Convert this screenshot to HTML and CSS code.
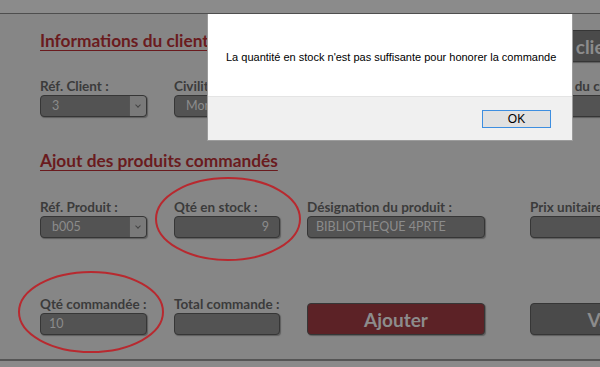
FILE: index.html
```html
<!DOCTYPE html>
<html lang="fr">
<head>
  <meta charset="UTF-8" />
  <title>Commandes clients</title>
  <link rel="stylesheet" href="styles.css">
</head>
<body>
  <div class="topbar"></div>

  <main class="form">
    <div class="head-row">
      <h2 class="section-title">Informations du client</h2>
      <button class="btn btn-dark btn-client">Voir client</button>
    </div>

    <div class="fields row-client">
      <div class="field">
        <label>Réf. Client :</label>
        <div class="select"><span>3</span><i class="caret"></i></div>
      </div>
      <div class="field">
        <label>Civilité :</label>
        <div class="select"><span>Monsieur</span><i class="caret"></i></div>
      </div>
      <div class="field">
        <label>Nom du client :</label>
        <div class="input"></div>
      </div>
      <div class="field">
        <label>Région du client :</label>
        <div class="input"></div>
      </div>
    </div>

    <h2 class="section-title title-products">Ajout des produits commandés</h2>

    <div class="fields row-product">
      <div class="field">
        <label>Réf. Produit :</label>
        <div class="select"><span>b005</span><i class="caret"></i></div>
      </div>
      <div class="field">
        <label>Qté en stock :</label>
        <div class="input num">9</div>
      </div>
      <div class="field">
        <label>Désignation du produit :</label>
        <div class="input">BIBLIOTHEQUE 4PRTE</div>
      </div>
      <div class="field">
        <label>Prix unitaire :</label>
        <div class="input"></div>
      </div>
    </div>

    <div class="fields row-order">
      <div class="field">
        <label>Qté commandée :</label>
        <div class="input">10</div>
      </div>
      <div class="field">
        <label>Total commande :</label>
        <div class="input"></div>
      </div>
      <button class="btn btn-red">Ajouter</button>
      <button class="btn btn-dark btn-validate">Valider</button>
    </div>
  </main>

  <div class="footer-line"></div>

  <svg class="marks" width="600" height="367" viewBox="0 0 600 367">
    <ellipse cx="228" cy="219" rx="72" ry="41" />
    <ellipse cx="91" cy="312" rx="72" ry="40" />
  </svg>

  <div class="dialog">
    <div class="dialog-body">La quantité en stock n'est pas suffisante pour honorer la commande</div>
    <div class="dialog-foot"><button class="ok">OK</button></div>
  </div>
</body>
</html>
```

FILE: styles.css
```css
*{box-sizing:border-box;margin:0;padding:0;}
html,body{width:600px;height:367px;overflow:hidden;}
body{background:#868686;font-family:Lato,"Open Sans",Arial,sans-serif;color:#3a3a3a;position:relative;}

.topbar{height:14px;background:#8b8b8b;border-bottom:1px solid #4e4e4e;}

.form{padding:0 0 0 40px;}
.head-row{display:flex;align-items:flex-start;margin-top:16px;}
.section-title{font-size:17.3px;line-height:22px;font-weight:700;color:#6a1b1e;text-decoration:underline;text-underline-offset:3px;text-decoration-thickness:1px;white-space:nowrap;}
.btn-client{margin-left:auto;width:120px;height:33px;margin-right:-50px;text-align:left;padding-left:6px;}
.title-products{margin-top:33px;}

.fields{display:grid;grid-template-columns:107px 106px 178px 178px;column-gap:27px;white-space:nowrap;}
.fields > :nth-child(4){margin-left:18px;}
.row-client{margin-top:16px;}
.row-product{margin-top:27px;}
.row-order{margin-top:58px;align-items:end;}

.field label{display:block;font-size:13.5px;line-height:16px;font-weight:700;color:#3b3b3b;margin-bottom:1px;}
.input,.select{height:22px;background:#535353;border:1px solid #363636;border-radius:4px;box-shadow:1px 1px 1px #5e5e5e;font-size:12.5px;line-height:20px;color:#8c8c8c;padding:0 10px 0 8px;overflow:hidden;}
.input.num{text-align:right;}
.select{display:flex;padding:0 0 0 11px;}
.select span{flex:1;}
.caret{width:17px;border-left:1px solid #555;background:#7a7a7a;border-radius:0 3px 3px 0;position:relative;}
.caret::after{content:"";position:absolute;left:6px;top:7px;width:3px;height:3px;border-right:1px solid #444;border-bottom:1px solid #444;transform:rotate(45deg);}

.btn{height:32px;border:1px solid #363636;border-radius:4px;box-shadow:1px 1px 1px #5e5e5e;font-family:inherit;font-size:19px;font-weight:700;color:#8c8c8c;}
.btn-red{background:#5c2226;}
.btn-dark{background:#4a4a4a;}
.btn-validate{padding-left:14px;}

.footer-line{position:absolute;left:0;right:0;top:359px;height:8px;border-top:2px solid #555;background:#8a8a8a;}

.marks{position:absolute;left:0;top:0;pointer-events:none;}
.marks ellipse{fill:none;stroke:#b8292f;stroke-width:2;}

.dialog{position:absolute;left:207px;top:14px;width:366px;height:127px;background:#fff;border:1px solid #9c9c9c;border-top:none;display:flex;flex-direction:column;font-family:"Liberation Sans",Arial,sans-serif;}
.dialog-body{flex:1;padding:37px 0 0 18px;font-size:11px;color:#000;}
.dialog-foot{height:44px;background:#f0f0f0;border-top:1px solid #e4e4e4;display:flex;justify-content:flex-end;align-items:flex-start;padding:13px 21px 0 0;}
.ok{width:69px;height:18px;background:#e1e1e1;border:1px solid #3d8ee0;font-family:inherit;font-size:12px;color:#000;}
```
